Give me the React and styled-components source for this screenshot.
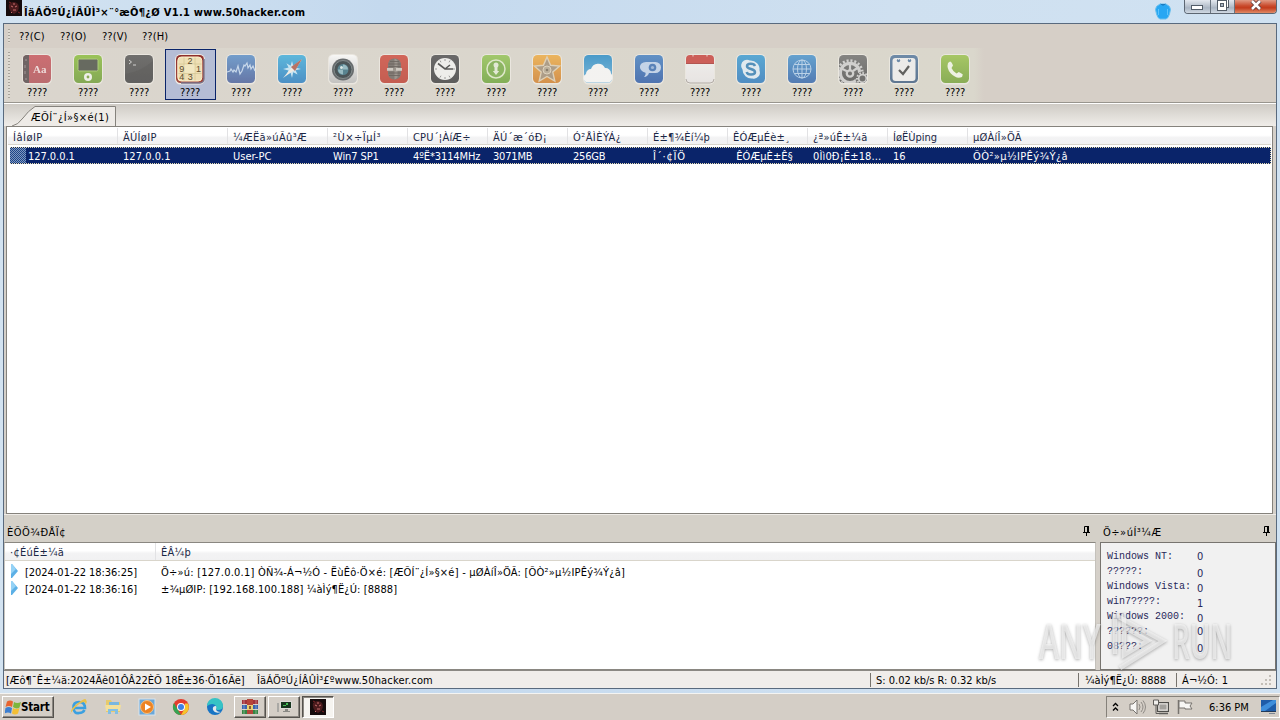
import React from "react";
import styled, { createGlobalStyle } from "styled-components";

const GlobalStyle = createGlobalStyle`
  * {
    box-sizing: border-box;
  }
  body {
    margin: 0;
    overflow: hidden;
    font-family: "DejaVu Sans Condensed", "DejaVu Sans", "Noto Sans", sans-serif;
    font-stretch: condensed;
    font-size: 11px;
    color: #000;
  }
`;

const Desktop = styled.div`
  position: relative;
  width: 1280px;
  height: 720px;
  display: flex;
  flex-direction: column;
  background: #d4d0c8;
`;

const Text = styled.span`
  display: inline-block;
  white-space: pre;
  letter-spacing: ${({ $ls }) => $ls || 0}px;
`;

const Window = styled.div`
  height: 694px;
  display: flex;
  flex-direction: column;
  padding: 0 3px 4px;
  background: linear-gradient(90deg, #d3e3f1 0%, #c4d9ee 30%, #cfe0f0 70%, #d0e2f2 100%);
  border-bottom: 1px solid #f4f4f2;
`;

const TitleBar = styled.div`
  height: 23px;
  display: flex;
  align-items: flex-start;
  padding-left: 3px;
`;

const TitleText = styled.div`
  flex: 1;
  padding: 5px 0 0 2px;
  font-weight: bold;
  line-height: 15px;
`;

const Shirt = styled.div`
  margin: 3px 13px 0 0;
  height: 18px;
`;

const Controls = styled.div`
  display: flex;
  width: 93px;
  height: 14px;
  border: 1px solid #5c6672;
  border-top: 0;
  border-radius: 0 0 4px 4px;
  overflow: hidden;
`;

const Control = styled.div`
  width: ${({ $w }) => $w}px;
  height: 13px;
  display: flex;
  justify-content: center;
  border-left: ${({ $first }) => ($first ? "0" : "1px solid #6a7480")};
  background: ${({ $close }) =>
    $close
      ? "linear-gradient(180deg, #e09a84 0%, #c94a2c 45%, #c33c1d 60%, #e08a66 100%)"
      : "linear-gradient(180deg, #e3e8ef 0%, #b5bfcb 50%, #a9b5c3 60%, #d0d9e3 100%)"};
`;

const Client = styled.div`
  flex: 1;
  display: flex;
  flex-direction: column;
  border: 1px solid #596a7e;
  background: #d5d0c9;
  min-height: 0;
`;

const MenuBar = styled.div`
  height: 24px;
  display: flex;
  align-items: center;
  padding-left: 4px;
  background: #d6cfc7;
`;

const Grip = styled.div`
  width: 2px;
  height: ${({ $h }) => $h}px;
  background: repeating-linear-gradient(180deg, #a8a39b 0 1px, #dfdbd3 1px 3px);
`;

const MenuItem = styled.div`
  width: ${({ $w }) => $w}px;
  padding-left: 9px;
`;

const ToolBar = styled.div`
  height: 55px;
  display: flex;
  align-items: flex-start;
  padding: 1px 0 0 4px;
  background: linear-gradient(90deg, #dad5cd 0, #dad7cc 970px, #d6cfc7 980px);
  border-bottom: 1px solid #98958e;
`;

const ToolGrip = styled(Grip)`
  margin-top: 3px;
`;

const Tools = styled.div`
  display: flex;
  margin-left: 2px;
`;

const Tool = styled.div`
  width: 51px;
  height: 51px;
  padding: ${({ $active }) => ($active ? "3px 1px 0 0" : "4px 1px 0 0")};
  display: flex;
  flex-direction: column;
  align-items: center;
  border: ${({ $active }) => ($active ? "1px solid #0a246a" : "0")};
  background: ${({ $active }) => ($active ? "#b5bdd5" : "transparent")};
`;

const ToolIcon = styled.svg`
  width: 32px;
  height: 32px;
  display: block;
  flex: none;
  opacity: ${({ $active }) => ($active ? 1 : 0.8)};
`;

const ToolLabel = styled.div`
  height: 13px;
  line-height: 16px;
  letter-spacing: -0.2px;
`;

const TabStrip = styled.div`
  height: 23px;
  display: flex;
  align-items: flex-end;
  padding-left: 8px;
  border-top: 1px solid #fff;
  background: linear-gradient(180deg, #cfcbc5, #f0ede9);
`;

const Tab = styled.div`
  position: relative;
  width: 104px;
  height: 20px;
  padding: 5px 0 0 19px;
  line-height: 14px;
  svg {
    position: absolute;
    left: 0;
    top: 0;
  }
  span {
    position: relative;
  }
`;

const GridBox = styled.div`
  height: 388px;
  margin: 0 3px 0 2px;
  padding: 1px;
  border: 1px solid #85827c;
  background: #fff;
`;

const HeaderRow = styled.div`
  display: flex;
  height: 17px;
  line-height: 19px;
  background: linear-gradient(180deg, #fff 0%, #fff 45%, #f3f3f4 60%, #f1f1f2 100%);
  border-bottom: 1px solid #d9d5cb;
  color: #1a2745;
`;

const Cell = styled.div`
  width: ${({ $w }) => ($w ? `${$w}px` : "auto")};
  flex: ${({ $w }) => ($w ? "none" : 1)};
  padding-left: ${({ $pad }) => $pad || 5}px;
  overflow: hidden;
  white-space: pre;
  border-right: ${({ $line }) => ($line ? "1px solid #e2e2e4" : "0")};
`;

const SelectedRow = styled.div`
  display: flex;
  height: 17px;
  margin: 2px 0 0 2px;
  line-height: 17px;
  color: #fff;
  background: #0a246a;
  border: 1px dotted #e6ddb0;
`;

const Flag = styled.div`
  width: 16px;
  height: 15px;
  margin-left: -1px;
  background: repeating-conic-gradient(#7f98be 0 25%, #1d4488 0 50%) 0 0 / 2px 2px;
`;

const Captions = styled.div`
  height: 28px;
  display: flex;
  align-items: center;
  padding-top: 8px;
  border-top: 1px solid #efece8;
  background: #d4d0c8;
`;

const Caption = styled.div`
  width: ${({ $w }) => $w}px;
  display: flex;
  align-items: center;
  justify-content: space-between;
  padding: 0 ${({ $right }) => $right}px 0 3px;
  svg {
    margin-bottom: 3px;
  }
`;

const Panels = styled.div`
  height: 128px;
  display: flex;
  justify-content: space-between;
`;

const LogPanel = styled.div`
  width: 1092px;
  border: 1px solid #8a8781;
  border-left-color: #c9c6bf;
  border-right-color: #c4c1bb;
  background: #fff;
`;

const LogHeader = styled(HeaderRow)`
  height: 18px;
  line-height: 20px;
`;

const LogRow = styled.div`
  display: flex;
  align-items: center;
  height: 17px;
  padding-left: 6px;
  svg {
    width: 8px;
    height: 14px;
    margin: -3px 6px 0 0;
  }
`;

const LogTime = styled.div`
  width: 136px;
`;

const Logs = styled.div`
  padding-top: 3px;
`;

const StatsPanel = styled.div`
  width: 176px;
  border: 1px solid #77746f;
  background: #f1f1f1;
  padding: 6px 0 0 6px;
  font-family: "Liberation Mono", monospace;
  font-size: 10px;
  color: #28285a;
`;

const StatRow = styled.div`
  display: flex;
  height: 15.05px;
  line-height: 15px;
`;

const StatName = styled.div`
  width: 90px;
`;

const StatValue = styled.div`
  padding-top: ${({ $drop }) => $drop}px;
  font-family: "DejaVu Sans Condensed", "DejaVu Sans", sans-serif;
  font-size: 11px;
`;

const StatusBar = styled.div`
  flex: 1;
  display: flex;
  align-items: center;
  border-top: 1px solid #8b8883;
  background: #f0edea;
`;

const StatusCell = styled.div`
  width: ${({ $w }) => $w}px;
  height: 14px;
  line-height: 15px;
  padding-left: ${({ $pad }) => $pad || 0}px;
  border-left: ${({ $line }) => ($line ? "1px solid #77736d" : "0")};
`;

const TaskBar = styled.div`
  height: 26px;
  display: flex;
  align-items: center;
  padding-left: 2px;
  background: #d4cec6;
`;

const StartButton = styled.div`
  width: 52px;
  height: 22px;
  display: flex;
  align-items: center;
  padding-left: 2px;
  font-weight: bold;
  font-size: 11.5px;
  border: 1px solid;
  border-color: #fff #55524d #55524d #fff;
  box-shadow: inset -1px -1px 0 #8b8781;
`;

const QuickLaunch = styled.div`
  display: flex;
  gap: 18px;
  margin: 0 11px 0 17px;
  svg {
    width: 16px;
    height: 18px;
    overflow: visible;
  }
`;

const TaskButton = styled.div`
  width: 32px;
  height: 22px;
  margin-right: 2px;
  display: flex;
  align-items: center;
  justify-content: center;
  border: 1px solid;
  border-color: ${({ $pressed }) =>
    $pressed ? "#55524d #fff #fff #55524d" : "#fff #55524d #55524d #fff"};
  box-shadow: ${({ $pressed }) =>
    $pressed ? "inset 1px 1px 0 #8b8781" : "inset -1px -1px 0 #8b8781"};
  background: ${({ $pressed }) => ($pressed ? "#f6f4f0" : "transparent")};
`;

const Tray = styled.div`
  width: 174px;
  height: 22px;
  margin-left: auto;
  display: flex;
  align-items: center;
  padding-left: 5px;
  border: 1px solid;
  border-color: #85817a #fff #fff #85817a;
`;

const TrayIcon = styled.svg`
  flex: none;
  margin-left: ${({ $gap }) => $gap || 0}px;
`;

const Clock = styled.div`
  width: 52px;
  margin-left: 15px;
  white-space: nowrap;
`;

const Watermark = styled.div`
  position: absolute;
  left: 1039px;
  top: 610px;
  width: 200px;
  height: 62px;
  display: flex;
  align-items: center;
  font-family: "Open Sans", "Liberation Sans", sans-serif;
  font-stretch: normal;
  color: rgba(246, 246, 246, 0.68);
  filter: drop-shadow(0 1px 1.5px rgba(80, 80, 80, 0.65));
`;

const Word = styled.div`
  width: ${({ $w }) => $w}px;
  font-size: 48px;
  font-weight: 600;
  line-height: 62px;
  white-space: nowrap;
  transform: scaleX(${({ $sx }) => $sx});
  transform-origin: left;
`;

const Base = ({ id, from, to }) => (
  <>
    <defs>
      <linearGradient id={id} x1="0" y1="0" x2="0" y2="1">
        <stop offset="0" stopColor={from} />
        <stop offset="1" stopColor={to} />
      </linearGradient>
    </defs>
    <rect x="1" y="1" width="30" height="30.5" rx="5.5" fill="#eeebe4" />
    <rect x="2" y="2" width="28" height="28" rx="4.5" fill={`url(#${id})`} />
  </>
);

const tools = [
  {
    from: "#c9555c",
    to: "#b35358",
    art: (
      <>
        <path d="M6 2h2v28H6a4 4 0 0 1-4-4V6a4 4 0 0 1 4-4z" fill="#55484a" />
        <path d="M4 12v3M4 18v3M5 6v2M5 25v2" stroke="#99898b" />
        <text x="12" y="20" fontFamily="Liberation Serif" fontWeight="bold" fontSize="11" fill="#f2dcdc">Aa</text>
      </>
    ),
  },
  {
    from: "#8bbf3c",
    to: "#6f9e38",
    art: (
      <>
        <rect x="6" y="6" width="20" height="12" rx="1.5" fill="#4b5046" stroke="#a5c96a" />
        <circle cx="16" cy="24" r="4" fill="#f4f6ee" />
        <circle cx="16" cy="24" r="1.4" fill="#78a13a" />
      </>
    ),
  },
  {
    from: "#555",
    to: "#484848",
    art: (
      <>
        <path d="M2 21Q17 19 30 8v18a4 4 0 0 1-4 4H6a4 4 0 0 1-4-4z" fill="#3d3d3d" opacity=".35" />
        <path d="M6 7l2.5 2L6 11M10 12h3" stroke="#d0d0d0" fill="none" />
      </>
    ),
  },
  {
    from: "#8f2e2c",
    to: "#a14b41",
    active: true,
    art: (
      <>
        <path d="M30 6v20a4 4 0 0 1-4 4H7" fill="none" stroke="#777189" strokeWidth="1.5" />
        <rect x="3.8" y="4" width="24" height="24" rx="3.5" fill="#eedfb5" stroke="#fff3ce" />
        <path d="M10 4.500v23M21 4.500v23M4.500 11h23M4.500 20.500h23" stroke="#d6c898" strokeWidth=".8" />
        <rect x="10.500" y="11.500" width="10" height="8.500" fill="#f2e7c2" />
        <g fontFamily="Liberation Sans" fontSize="9" fill="#5d4c2c">
          <text x="13.500" y="11">2</text>
          <text x="5.200" y="19">9</text>
          <text x="22" y="19">1</text>
          <text x="5.200" y="27">4</text>
          <text x="13.800" y="27">3</text>
        </g>
      </>
    ),
  },
  {
    from: "#5a90cb",
    to: "#49609e",
    art: <path d="M2 19l3-1 1-2 2 3 1-2 2 2 2-6 2 8 2-3 2-6 1 1 2-3 1 5 2-3 1 4 2-3 2 5" fill="none" stroke="#c4d9f2" strokeWidth="1.2" />,
  },
  {
    from: "#3fb0df",
    to: "#2a7fc4",
    art: (
      <>
        <path d="M16 8l1.400 5 4-3-2 4.400L25 16l-5.400 1.200 2 4.400-4.400-2.400L16 25l-1.500-5.600-4.200 2.400 2.200-4.400L7 16l5.600-1.500-2.200-4.300 4.200 2.600z" fill="#c5e8fa" />
        <path d="M7 25L17 13l9-7-6 10z" fill="#f6f1e9" />
        <path d="M15 14l11-8-7 12z" fill="#b05b4c" />
      </>
    ),
  },
  {
    from: "#fff",
    to: "#bdbdbd",
    art: (
      <>
        <circle cx="16" cy="16.500" r="11" fill="#4c5257" />
        <circle cx="16" cy="16.500" r="9" fill="#29363b" stroke="#6d787b" />
        <circle cx="16" cy="16.500" r="5.500" fill="#397082" />
        <path d="M16 11.500a5 5 0 0 1 5 5l-5 0zM11 16.500a5 5 0 0 0 5 5l0-5z" fill="#88b5c0" />
        <circle cx="14.500" cy="14.500" r="1.500" fill="#dbecec" />
      </>
    ),
  },
  {
    from: "#d04b3e",
    to: "#bf4033",
    art: (
      <>
        <rect x="10" y="5.500" width="13" height="21" rx="6" fill="#6e6661" />
        <path d="M16.500 5.500a6 6 0 0 1 3 2v17a6 6 0 0 1-3 2z" fill="#8f8780" />
        <path d="M10.500 11h12M10.500 13.500h12M10.500 20h12M11 22.500h11M12 8.500h9" stroke="#504843" strokeWidth=".8" />
        <rect x="9" y="15" width="15" height="2.800" fill="#cdc6bf" />
        <rect x="15" y="15" width="3" height="2.800" fill="#8b837c" />
      </>
    ),
  },
  {
    from: "#4e4e50",
    to: "#3e3e40",
    art: (
      <>
        <circle cx="16" cy="16" r="11" fill="#f3f3f2" />
        <path d="M16 6v2M16 24v2M6 16h2M24 16h2M11 7.500l1 1.800M21 7.500l-1 1.800M11 24.500l1-1.800M21 24.500l-1-1.800" stroke="#8c8c8c" />
        <path d="M9 10.500l7 5.500h8M16 16l5-4" stroke="#3b3b3b" strokeWidth="1.600" fill="none" />
      </>
    ),
  },
  {
    from: "#94c555",
    to: "#6da53b",
    art: (
      <>
        <circle cx="16" cy="16" r="9" fill="#79ad48" stroke="#dfecc9" strokeWidth="1.500" />
        <circle cx="16" cy="12" r="2.500" fill="#e5eed8" />
        <path d="M14.500 13h3v5h1.700L16 22l-3.200-4h1.700z" fill="#e5eed8" />
      </>
    ),
  },
  {
    from: "#f0ad43",
    to: "#d2802d",
    art: (
      <>
        <path d="M16 4l3.600 8.300 9 .8-6.800 6 2 9L16 23.500 8.200 28l2-8.900-6.800-6 9-.8z" fill="#a29078" stroke="#e0cfb2" strokeWidth="1.400" />
        <circle cx="16" cy="17" r="4" fill="#b6a891" stroke="#dfd2ba" />
        <circle cx="16" cy="17" r="1.300" fill="#756957" />
      </>
    ),
  },
  {
    from: "#268cc9",
    to: "#69afd9",
    art: <path d="M6 29.500a4.500 4.500 0 0 1-2-8.500 5 5 0 0 1 5-5 7.500 7.500 0 0 1 14-1 5.500 5.500 0 0 1 6 5.500c3 3 1 9-3 9z" fill="#fafafa" />,
  },
  {
    from: "#4380c4",
    to: "#2d5ba9",
    art: (
      <>
        <path d="M13 9h9.500a5.500 5.500 0 0 1 0 11H16c-.5 2-2.500 4-5 4 1.500-1.500 1.800-3 1.500-4.200C5 18 5 9 13 9z" fill="#bfd3ee" />
        <circle cx="19.500" cy="14.500" r="3.800" fill="#3b6eb4" />
        <circle cx="19.500" cy="14.500" r="1.600" fill="#92b2dc" />
      </>
    ),
  },
  {
    from: "#f7f5f5",
    to: "#eae7e7",
    art: (
      <>
        <path d="M6 2h20a4 4 0 0 1 4 4v5H2V6a4 4 0 0 1 4-4z" fill="#c9423d" />
        <path d="M2 10.500h28" stroke="#a93633" />
        <path d="M9 2v1.500M23 2v1.500" stroke="#e3a5a0" strokeWidth="1.500" />
        <path d="M2 26a4 4 0 0 0 4 4h20a4 4 0 0 0 4-4" fill="none" stroke="#98918c" strokeWidth=".8" />
      </>
    ),
  },
  {
    from: "#3a9dd5",
    to: "#2f7bc0",
    art: (
      <>
        <path d="M9 7.500a6 6 0 0 1 6 0 9 9 0 0 1 9.500 10 6 6 0 0 1-7 8 9 9 0 0 1-10-9 6 6 0 0 1 1.500-9z" fill="#e2eef7" />
        <path d="M20 13c-1-3-8-3-8 .2s8 2.500 8 5.800-7.500 3.500-8.300 0" fill="none" stroke="#347fb5" strokeWidth="2.500" />
      </>
    ),
  },
  {
    from: "#4895d0",
    to: "#3265ad",
    art: (
      <g fill="none" stroke="#b1d0ee" strokeWidth="1">
        <circle cx="16" cy="16" r="9" />
        <ellipse cx="16" cy="16" rx="4.500" ry="9" />
        <path d="M7 16h18M16 7v18M8.500 11.500h15M8.500 20.500h15" />
      </g>
    ),
  },
  {
    from: "#707070",
    to: "#505050",
    art: (
      <>
        <clipPath id="gearClip">
          <rect x="2" y="2" width="28" height="28" rx="4.5" />
        </clipPath>
        <g fill="none" stroke="#cfcfcf" clipPath="url(#gearClip)">
          <circle cx="13" cy="20" r="12.500" strokeWidth="2.500" strokeDasharray="2.100 1.830" />
          <circle cx="13" cy="20" r="9.700" strokeWidth="3.200" />
          <path d="M13 11v6M4.500 15.500l6 3M21 14.500l-5 3.500" strokeWidth="2.200" />
          <circle cx="13" cy="20.500" r="3.200" strokeWidth="2.300" />
          <circle cx="25.500" cy="25.500" r="7" fill="#5a5a5a" stroke="none" />
          <circle cx="25.500" cy="25.500" r="5.500" strokeWidth="2" strokeDasharray="1.700 1.440" />
          <circle cx="25.500" cy="25.500" r="3.800" strokeWidth="1.700" />
        </g>
      </>
    ),
  },
  {
    from: "#54789f",
    to: "#415f83",
    art: (
      <>
        <rect x="4.500" y="5" width="23" height="23" rx="3" fill="#f1f1f1" />
        <circle cx="10.500" cy="7.500" r="1.700" fill="#54789f" />
        <circle cx="21.500" cy="7.500" r="1.700" fill="#54789f" />
        <path d="M10.500 5v2M21.500 5v2" stroke="#eef2f5" strokeWidth=".8" />
        <path d="M11 17l4 4 6-8" fill="none" stroke="#444" strokeWidth="2.200" />
      </>
    ),
  },
  {
    from: "#9ac34c",
    to: "#76a33a",
    art: <path d="M9 10l2-1.500q1.500 0 3 4L12.500 15q1.500 3.500 5 5.500l2.300-1.500q2.500 1 4 2.500 0 2.500-2.500 3-4.500 1-9.500-4-4.500-5-2.800-10.500z" fill="#f3f8e9" />,
  },
];

const columns = [
  { w: 110, head: "ÍâÍøIP", hs: 0.5, value: "127.0.0.1", vs: -0.05 },
  { w: 110, head: "ÄÚÍøIP", hs: 0.3, value: "127.0.0.1", vs: 0.05 },
  { w: 100, head: "¼ÆËã»úÃû³Æ", hs: 0.35, value: "User-PC" },
  { w: 80, head: "²Ù×÷ÏµÍ³", hs: 0.5, value: "Win7 SP1", vs: -0.1 },
  { w: 80, head: "CPU´¦ÀíÆ÷", hs: 0.2, value: "4ºË*3114MHz", vs: -0.1 },
  { w: 80, head: "ÄÚ´æ´óÐ¡", hs: 0.35, value: "3071MB", vs: -0.2 },
  { w: 80, head: "Ó²ÅÌÈÝÁ¿", hs: 0.45, value: "256GB", vs: -0.2 },
  { w: 80, head: "É±¶¾Èí¼þ", hs: 0.2, value: "Î´·¢ÏÖ", vs: 0.8 },
  { w: 80, head: "ÊÓÆµÉè±¸", hs: 0.2, value: " ÊÓÆµÈ±Ê§", vs: 0.1 },
  { w: 80, head: "¿ª»úÊ±¼ä", hs: 0.25, value: "0Ìì0Ð¡Ê±18...", vs: 0.15 },
  { w: 80, head: "ÍøËÙping", value: "16" },
  { head: "µØÀíÎ»ÖÃ", hs: 0.25, value: "ÕÒ²»µ½IPÊý¾Ý¿â", vs: 0.4 },
];

const logs = [
  {
    time: "[2024-01-22 18:36:25]",
    text: "Ö÷»ú: [127.0.0.1] ÒÑ¾-Á¬½Ó - ËùÊô·Ö×é: [ÆÕÍ¨¿Í»§×é] - µØÀíÎ»ÖÃ: [ÕÒ²»µ½IPÊý¾Ý¿â]",
    ls: 0.22,
  },
  { time: "[2024-01-22 18:36:16]", text: "±¾µØIP: [192.168.100.188] ¼àÌý¶Ë¿Ú: [8888]", ls: 0.1 },
];

const stats = [
  { name: "Windows NT:", value: 0, drop: 0 },
  { name: "?????:", value: 0, drop: 2 },
  { name: "Windows Vista:", value: 0, drop: 2 },
  { name: "win7????:", value: 1, drop: 2 },
  { name: "Windows 2000:", value: 0, drop: 2 },
  { name: "??????:", value: 0, drop: 0 },
  { name: "08???:", value: 0, drop: 2 },
];

const Pin = () => (
  <svg width="9" height="10" viewBox="0 0 9 10">
    <path d="M2.500 6V.500h4V6M1 6.500h7M4.500 7v3" fill="none" stroke="#000" />
    <path d="M5 0h2v6H5z" />
  </svg>
);

const HackerIcon = ({ size }) => (
  <svg width={size} height={size} viewBox="0 0 16 16">
    <rect width="16" height="16" fill="#160b0c" />
    <path d="M3 4q5-4 9 0 2 4-1 8l-3 2-3-2Q2 8 3 4z" fill="#4b1b1d" />
    <path d="M5 6l2 1M11 6L9 7M7 10h3M8 3v2M5 12l1 1" stroke="#c96d6c" />
    <path d="M3 2l2 1M12 12l2 1" stroke="#7d2225" />
  </svg>
);

const TitleBarArea = () => (
  <TitleBar>
    <HackerIcon size={16} />
    <TitleText>
      <Text $ls={0.29}>ÎäÁÖºÚ¿ÍÂÛÌ³×¨°æÔ¶¿Ø V1.1 www.50hacker.com</Text>
    </TitleText>
    <Shirt>
      <svg width="16" height="17" viewBox="0 0 16 17">
        <path d="M5 1h6l3.500 2.500 1 3-1 4.500-1.500 3.500-2 1.500H5l-2-1.500L1.500 11 .5 6.500l1-3z" fill="#27a7f3" stroke="#69bfee" />
        <path d="M5.500 1q2.500 2.500 5 0" fill="#1d7fc4" stroke="#1576bd" strokeWidth=".7" />
        <path d="M3.500 6v6M12.500 6v6" stroke="#5cc3fb" />
      </svg>
    </Shirt>
    <Controls>
      <Control $w={25} $first>
        <svg width="14" height="12">
          <rect x="1.500" y="5.500" width="11" height="4" fill="#fff" stroke="#525c68" />
        </svg>
      </Control>
      <Control $w={25}>
        <svg width="14" height="12">
          <rect x="4.500" y="-1.500" width="8" height="9" fill="#fff" stroke="#525c68" />
          <rect x="1.500" y=".5" width="9" height="10" fill="#fff" stroke="#525c68" />
          <rect x="4.500" y="3.500" width="3" height="3" fill="#a9b5c3" stroke="#525c68" />
        </svg>
      </Control>
      <Control $w={42} $close>
        <svg width="14" height="12">
          <path d="M3 1l8 8M11 1L3 9" stroke="#5c3a38" strokeWidth="4.200" />
          <path d="M3 1l8 8M11 1L3 9" stroke="#fff" strokeWidth="2.500" />
        </svg>
      </Control>
    </Controls>
  </TitleBar>
);

const App = () => {
  return (
    <>
      <GlobalStyle />
      <Desktop>
        <Window>
          <TitleBarArea />
          <Client>
            <MenuBar>
              <Grip $h={14} />
              <MenuItem $w={41}><Text $ls={0.1}>??(C)</Text></MenuItem>
              <MenuItem $w={42}><Text $ls={0.1}>??(O)</Text></MenuItem>
              <MenuItem $w={40}><Text $ls={0.1}>??(V)</Text></MenuItem>
              <MenuItem $w={41}><Text $ls={0.1}>??(H)</Text></MenuItem>
            </MenuBar>
            <ToolBar>
              <ToolGrip $h={46} />
              <Tools>
                {tools.map((tool, i) => (
                  <Tool key={i} $active={tool.active}>
                    <ToolIcon viewBox="0 0 32 32" $active={tool.active}>
                      <Base id={`tool${i}`} from={tool.from} to={tool.to} />
                      {tool.art}
                    </ToolIcon>
                    <ToolLabel>????</ToolLabel>
                  </Tool>
                ))}
              </Tools>
            </ToolBar>
            <TabStrip>
              <Tab>
                <svg width="104" height="20">
                  <path d="M0 20Q6 19 11 12T23 .5H103.500V20" fill="#eeebe7" stroke="#85827c" />
                </svg>
                <Text $ls={0.42}>ÆÕÍ¨¿Í»§×é(1)</Text>
              </Tab>
            </TabStrip>
            <GridBox>
              <HeaderRow>
                {columns.map((col) => (
                  <Cell key={col.head} $w={col.w} $line={!!col.w}>
                    <Text $ls={col.hs}>{col.head}</Text>
                  </Cell>
                ))}
              </HeaderRow>
              <SelectedRow>
                <Flag />
                {columns.map((col, i) => (
                  <Cell key={col.head} $w={i === 0 ? 92 : col.w} $pad={i === 0 ? 2 : 5}>
                    <Text $ls={col.vs}>{col.value}</Text>
                  </Cell>
                ))}
              </SelectedRow>
            </GridBox>
            <Captions>
              <Caption $w={1096} $right={9}>
                <Text $ls={0.5}>ÈÕÖ¾ÐÅÏ¢</Text>
                <Pin />
              </Caption>
              <Caption $w={176} $right={5}>
                <Text $ls={0.5}>Ö÷»úÍ³¼Æ</Text>
                <Pin />
              </Caption>
            </Captions>
            <Panels>
              <LogPanel>
                <LogHeader>
                  <Cell $w={151} $line><Text $ls={0.25}>·¢ÉúÊ±¼ä</Text></Cell>
                  <Cell><Text $ls={0.3}>ÊÂ¼þ</Text></Cell>
                </LogHeader>
                <Logs>
                  {logs.map((log) => (
                    <LogRow key={log.time}>
                      <svg viewBox="0 0 8 14">
                        <path d="M0 0h1l6 7-6 7H0z" fill="#5cb0e6" />
                        <path d="M0 0h1l4 5-5 5z" fill="#94d2f6" />
                      </svg>
                      <LogTime><Text $ls={-0.04}>{log.time}</Text></LogTime>
                      <Text $ls={log.ls}>{log.text}</Text>
                    </LogRow>
                  ))}
                </Logs>
              </LogPanel>
              <StatsPanel>
                {stats.map((stat) => (
                  <StatRow key={stat.name}>
                    <StatName>{stat.name}</StatName>
                    <StatValue $drop={stat.drop}>{stat.value}</StatValue>
                  </StatRow>
                ))}
              </StatsPanel>
            </Panels>
            <StatusBar>
              <StatusCell $w={251} $pad={2}>
                <Text>[Æô¶¯Ê±¼ä:2024Äê01ÔÂ22ÈÕ 18Ê±36·Ö16Ãë]</Text>
              </StatusCell>
              <StatusCell $w={615} $pad={2}>
                <Text $ls={0.17}>ÎäÁÖºÚ¿ÍÂÛÌ³£ºwww.50hacker.com</Text>
              </StatusCell>
              <StatusCell $w={208} $pad={5} $line>
                <Text>S: 0.02 kb/s R: 0.32 kb/s</Text>
              </StatusCell>
              <StatusCell $w={98} $pad={6} $line>
                <Text>¼àÌý¶Ë¿Ú: 8888</Text>
              </StatusCell>
              <StatusCell $w={84} $pad={5} $line>
                <Text $ls={0.15}>Á¬½Ó: 1</Text>
              </StatusCell>
              <svg width="12" height="12">
                <path d="M9 1h2v2H9zM5 5h2v2H5zM9 5h2v2H9zM1 9h2v2H1zM5 9h2v2H5zM9 9h2v2H9z" fill="#c3beb7" />
              </svg>
            </StatusBar>
          </Client>
        </Window>

        <TaskBar>
          <StartButton>
            <svg width="16" height="16" viewBox="0 0 16 16">
              <path d="M2 2.500q3-2 6 0L7 8Q4 6 .5 8z" fill="#e8642f" />
              <path d="M9 3q3 2 7 0l-1.500 5.500q-3 2-6.500-.5z" fill="#7db63d" />
              <path d="M.5 9q3-2 6.500 0l-1 5.500q-3-2-6.500 0z" fill="#3d7fd0" />
              <path d="M8 9q3 2 6.500 0L13 14.500q-3 2-6 0z" fill="#f3bf35" />
            </svg>
            <Text $ls={-0.2}>Start</Text>
          </StartButton>
          <QuickLaunch>
            <svg viewBox="0 0 16 16">
              <path d="M3.500 9H14q0-6-6-6T2.500 9 8 14q4 0 5.500-3" fill="none" stroke="#3ba0e0" strokeWidth="2.600" />
              <path d="M0 14Q-1 10 7 4t8-3q2 2-1 5 1-3-1-3-4 0-10 7t-3 4z" fill="#e9c14a" />
            </svg>
            <svg viewBox="0 0 16 16">
              <path d="M1 1h5l1 2h8v10H1z" fill="#e6ca6c" />
              <path d="M4 3h10v3H4z" fill="#78b7df" />
              <path d="M0 6h16l-1 6H1z" fill="#f3e09a" />
              <path d="M3 15v-5h10v5h-3v-3H6v3z" fill="#82bfe4" />
            </svg>
            <svg viewBox="0 0 16 16">
              <rect x="0" y="0" width="16" height="16" fill="#6aa7d8" stroke="#d6e3ee" />
              <circle cx="8" cy="8" r="6.500" fill="#ed8322" stroke="#f5c182" />
              <path d="M6 4.500l6 3.500-6 3.500z" fill="#fff" />
            </svg>
            <svg viewBox="0 0 16 16">
              <circle cx="8" cy="8" r="8" fill="#e33d2e" />
              <path d="M1 4l4 7 3 5A8 8 0 0 1 1 4z" fill="#35a352" />
              <path d="M8 16l4-7V4.500h3A8 8 0 0 1 8 16z" fill="#f6c52c" />
              <circle cx="8" cy="8" r="4" fill="#fff" />
              <circle cx="8" cy="8" r="3" fill="#3d80e5" />
            </svg>
            <svg viewBox="0 0 16 16">
              <circle cx="8" cy="8" r="8" fill="#1874c4" />
              <path d="M0 7a8 8 0 0 1 16 0q0 4-5 4-2 0-2-1 1-1 0-3-3-4-9 0z" fill="#36c3c5" />
              <path d="M9 10q1-1 0-3-4 0-3 4 2 4 8 2-5 0-5-3z" fill="#e2e8eb" />
            </svg>
          </QuickLaunch>
          <TaskButton>
            <svg width="16" height="16" viewBox="0 0 16 16">
              <path d="M0 1h16v4H0z" fill="#a2333b" />
              <path d="M0 6h16v4H0z" fill="#3865b0" />
              <path d="M0 11h16v4H0z" fill="#348544" />
              <path d="M5 0h6v15H5z" fill="#b5453a" />
              <path d="M5 6h6v5H5z" fill="#e9d173" />
              <path d="M7 7h2v3H7z" fill="#8b5b35" />
              <path d="M2 1v14M14 1v14" stroke="#fff" strokeWidth=".7" opacity=".5" />
            </svg>
          </TaskButton>
          <TaskButton>
            <svg width="16" height="16" viewBox="0 0 16 16">
              <path d="M1 4v9h2V4z" fill="#aaa9a5" />
              <path d="M4 2h12v8H4z" fill="#dddcd8" />
              <path d="M5 3h10v6H5z" fill="#16351e" />
              <path d="M7 6h3v1H7zM10 4h2v2h-2z" fill="#44bf55" />
              <path d="M9 10h3v2h2v1H7v-1h2z" fill="#898984" />
            </svg>
          </TaskButton>
          <TaskButton $pressed>
            <HackerIcon size={16} />
          </TaskButton>
          <Tray>
            <TrayIcon width="7" height="10" viewBox="0 0 7 10">
              <path d="M1 4l2.500-2.500L6 4M1 8.500L3.500 6 6 8.500" fill="none" stroke="#000" strokeWidth="1.300" />
            </TrayIcon>
            <TrayIcon $gap={10} width="18" height="16" viewBox="0 0 18 16">
              <path d="M1 5h3l4-4v14l-4-4H1z" fill="#f7f6f4" stroke="#77736e" />
              <path d="M10 5q2 3 0 6M12 3q4 5 0 10M14 1.500q5 6.500 0 13" fill="none" stroke="#8f8b86" />
            </TrayIcon>
            <TrayIcon $gap={6} width="17" height="16" viewBox="0 0 17 16">
              <rect x="4.500" y="3.500" width="11" height="9" fill="#b9b7b3" stroke="#4f4e4b" />
              <rect x="6" y="5" width="8" height="6" fill="#a3a19d" stroke="#efeeec" strokeWidth=".8" />
              <path d="M6 14.500h9" stroke="#5f5d5a" strokeWidth="1.500" />
              <path d="M.5 1v5h5V1z" fill="#f1efec" stroke="#5f5d5a" />
              <path d="M3 6v8.500h4" fill="none" stroke="#5f5d5a" />
            </TrayIcon>
            <TrayIcon $gap={7} width="17" height="16" viewBox="0 0 17 16">
              <path d="M1.500 1v14" stroke="#77736e" strokeWidth="1.500" />
              <path d="M2 2h6v2h7l-2 3 2 3H8V9H2z" fill="#f7f6f4" stroke="#77736e" />
            </TrayIcon>
            <Clock><Text>6:36 PM</Text></Clock>
            <TrayIcon width="15" height="14" viewBox="0 0 15 14">
              <rect width="15" height="11" fill="#1f5ca8" />
              <path d="M0 7L12 0h3v3L4 11H0z" fill="#3f8edb" />
              <path d="M0 11.500h15" stroke="#223a59" />
              <path d="M8 13.500h6" stroke="#7c8794" />
            </TrayIcon>
          </Tray>
        </TaskBar>

        <Watermark>
          <Word $w={73} $sx={0.63}>ANY</Word>
          <svg width="60" height="62" viewBox="0 0 60 62">
            <g fill="none" stroke="#f8f8f8" strokeOpacity=".65" strokeWidth="4.500">
              <path d="M3 4v40M3 5l48 26L8 58" />
              <path d="M12 3v42l24-14.500L12 17" />
            </g>
          </svg>
          <Word $w={60} $sx={0.58}>RUN</Word>
        </Watermark>
      </Desktop>
    </>
  );
};

export default App;
